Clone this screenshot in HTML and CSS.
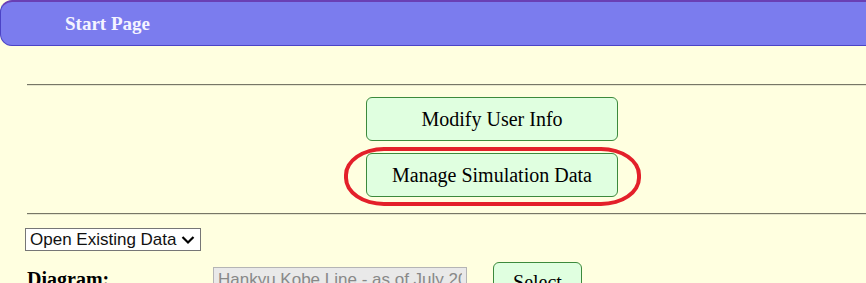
FILE: index.html
```html
<!DOCTYPE html>
<html>
<head>
<meta charset="utf-8">
<link rel="stylesheet" href="styles.css">
</head>
<body>
<div class="header"><span class="title">Start Page</span></div>
<div class="content">
  <hr class="rule rule-top">
  <div class="actions">
    <button class="btn big">Modify User Info</button>
    <div class="highlight-wrap">
      <button class="btn big">Manage Simulation Data</button>
      <div class="ring"></div>
    </div>
  </div>
  <hr class="rule rule-mid">
  <div class="mode-wrap">
    <select class="mode"><option>Open Existing Data</option></select>
    <svg class="chevron" width="14" height="10" viewBox="0 0 14 10"><path d="M1.5 2 L7 7.5 L12.5 2" fill="none" stroke="#000" stroke-width="2.2"/></svg>
  </div>
  <div class="diagram-row">
    <span class="label">Diagram:</span>
    <input class="diagram-input" type="text" value="Hankyu Kobe Line - as of July 2023" disabled>
    <button class="btn small">Select</button>
  </div>
</div>
</body>
</html>
```

FILE: styles.css
```css
html, body {
  margin: 0;
  padding: 0;
  background: #ffffe0;
  overflow: hidden;
  font-family: "Liberation Serif", "Times New Roman", serif;
}
.header {
  margin-right: -20px;
  background: #7b7cee;
  border: 1px solid #4b43c6;
  border-top: 2px solid #6a3fb4;
  border-radius: 12px;
  display: flex;
  align-items: center;
  padding-left: 64px;
  box-sizing: border-box;
  height: 46px;
}
.title {
  color: #f4f4ff;
  font-weight: bold;
  font-size: 19px;
  margin-top: 1px;
}
.content {
  padding-left: 27px;
}
.rule {
  border: none;
  border-top: 1px solid #777766;
  border-bottom: 1px solid #e6e6cc;
  height: 0;
  margin: 0 -20px 0 0;
}
.rule-top { margin-top: 38px; }
.actions {
  padding-left: 339px;
  padding-top: 11px;
  display: flex;
  flex-direction: column;
  gap: 12px;
}
.btn {
  background: #e0ffe0;
  border: 1px solid #3c8a3c;
  border-radius: 6px;
  font-family: "Liberation Serif", "Times New Roman", serif;
  color: #000;
  padding: 0;
  box-sizing: border-box;
}
.btn.big {
  width: 252px;
  height: 44px;
  font-size: 20px;
}
.highlight-wrap {
  position: relative;
  width: 252px;
  height: 44px;
}
.ring {
  position: absolute;
  left: -22px;
  top: -6px;
  width: 297px;
  height: 59px;
  box-sizing: border-box;
  border: 4px solid #e3202a;
  border-radius: 40px / 28px;
  pointer-events: none;
}
.rule-mid { margin-top: 16px; }
.mode-wrap {
  position: relative;
  width: 176px;
  margin: 13px 0 0 -2px;
}
.mode {
  -webkit-appearance: none;
  appearance: none;
  font-family: "Liberation Sans", Arial, sans-serif;
  font-size: 17px;
  height: 23px;
  width: 176px;
  border: 1px solid #767676;
  border-radius: 0;
  background: #fff;
  color: #111;
  padding: 0 0 0 4px;
  display: block;
}
.chevron {
  position: absolute;
  right: 6px;
  top: 7px;
  pointer-events: none;
}
.diagram-row {
  display: flex;
  align-items: flex-start;
  margin-top: 11px;
}
.label {
  font-weight: bold;
  font-size: 20px;
  width: 186px;
  margin-top: 6px;
}
.diagram-input {
  width: 254px;
  height: 26px;
  box-sizing: border-box;
  margin-top: 5px;
  font-family: "Liberation Sans", Arial, sans-serif;
  font-size: 17px;
  color: #888;
  background: #e9e9e9;
  border: 1px solid #b5b5b5;
  padding: 1px 4px;
}
.btn.small {
  margin-left: 26px;
  width: 89px;
  height: 40px;
  font-size: 20px;
}
```
